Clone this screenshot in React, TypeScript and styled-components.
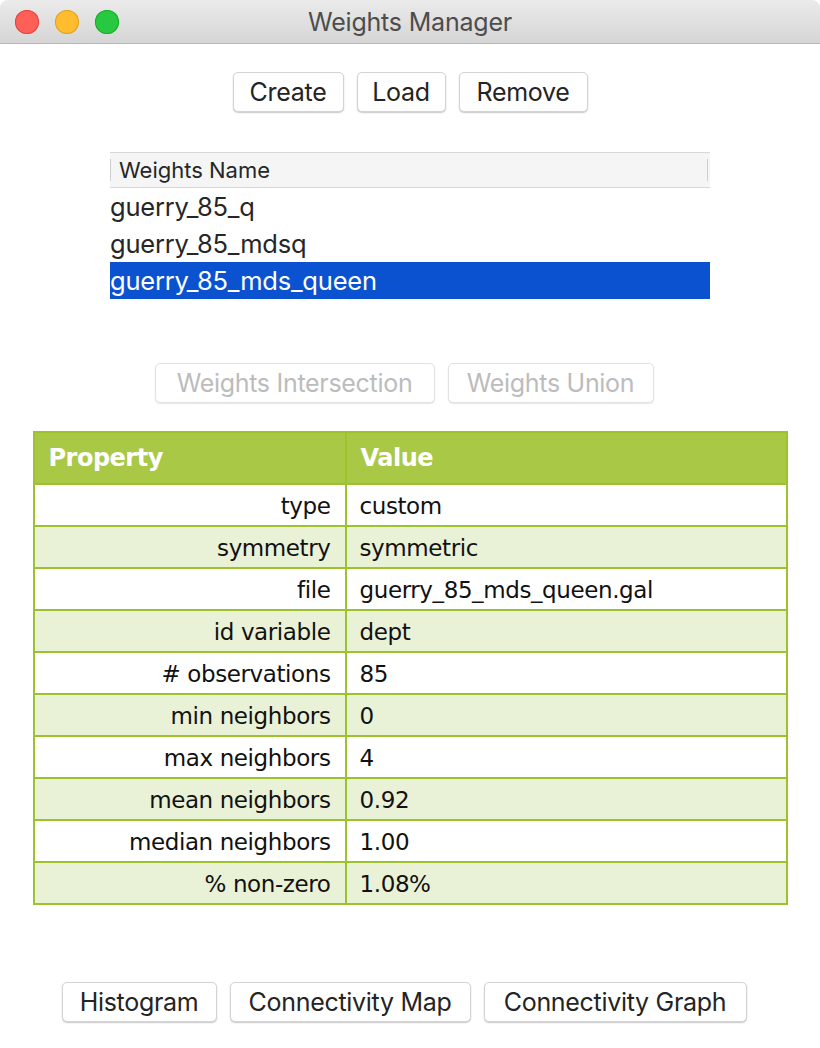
import React from "react";
import styled, { createGlobalStyle } from "styled-components";

const Global = createGlobalStyle`
  html, body { margin: 0; padding: 0; background: #ffffff; }
  body { font-family: Inter, "Liberation Sans", sans-serif; }
`;

const Window = styled.div`
  width: 820px;
  height: 1048px;
  background: #ffffff;
  display: flex;
  flex-direction: column;
  overflow: hidden;
`;

const TitleBar = styled.div`
  height: 43px;
  flex: none;
  display: flex;
  align-items: center;
  position: relative;
  background: linear-gradient(#ebebeb, #d5d5d5);
  border-bottom: 1px solid #b9b9b9;
  border-radius: 8px 8px 0 0;
`;

const Lights = styled.div`
  display: flex;
  gap: 16px;
  padding-left: 15px;
`;

const Light = styled.span<{ $c: string; $b: string }>`
  width: 24px;
  height: 24px;
  border-radius: 50%;
  background: ${(p) => p.$c};
  box-shadow: inset 0 0 0 1px ${(p) => p.$b};
`;

const Title = styled.div`
  position: absolute;
  left: 0;
  right: 0;
  text-align: center;
  font-size: 25px;
  letter-spacing: -0.2px;
  color: #4d4d4d;
  pointer-events: none;
`;

const Body = styled.div`
  display: flex;
  flex-direction: column;
  align-items: center;
  padding-top: 28px;
`;

const ButtonRow = styled.div<{ $mt?: number; $shift?: number }>`
  display: flex;
  gap: 13px;
  margin-top: ${(p) => p.$mt ?? 0}px;
  margin-right: ${(p) => (p.$shift ?? 0) * 2}px;
`;

const Button = styled.button<{ $w: number; $disabled?: boolean }>`
  width: ${(p) => p.$w}px;
  height: 40px;
  box-sizing: border-box;
  background: #ffffff;
  border: 1px solid ${(p) => (p.$disabled ? "#e2e2e2" : "#d3d3d3")};
  border-radius: 5px;
  box-shadow: 0 1px 1.5px ${(p) => (p.$disabled ? "rgba(0,0,0,0.10)" : "rgba(0,0,0,0.22)")};
  font-family: Inter, "Liberation Sans", sans-serif;
  font-size: 25px;
  letter-spacing: -0.3px;
  color: ${(p) => (p.$disabled ? "#bcbcbc" : "#242424")};
  padding: 0;
  display: flex;
  align-items: center;
  justify-content: center;
`;

const List = styled.div`
  width: 600px;
  margin-top: 40px;
  display: flex;
  flex-direction: column;
`;

const ListHeader = styled.div`
  height: 34px;
  background: #f5f5f5;
  border-top: 1px solid #d8d8d8;
  border-bottom: 1px solid #d8d8d8;
  display: flex;
  align-items: center;
  justify-content: space-between;
  font-size: 22px;
  color: #262626;
`;

const HeaderLabel = styled.span`
  display: flex;
  align-items: center;
  gap: 8px;
  &::before {
    content: "";
    width: 1px;
    height: 22px;
    background: #cfcfcf;
  }
`;

const HeaderSep = styled.span`
  width: 1px;
  height: 22px;
  background: #cfcfcf;
  margin-right: 2px;
`;

const ListRow = styled.div<{ $sel?: boolean }>`
  height: 37px;
  display: flex;
  align-items: center;
  font-size: 25.5px;
  letter-spacing: -0.2px;
  color: ${(p) => (p.$sel ? "#ffffff" : "#262626")};
  background: ${(p) => (p.$sel ? "#0b52d1" : "transparent")};
`;

const Table = styled.table`
  margin-top: 28px;
  width: 755px;
  border-collapse: collapse;
  border: 2px solid #9cc22c;
  font-family: "DejaVu Sans", Verdana, sans-serif;
  color: #111111;
`;

const Th = styled.th<{ $w?: number }>`
  height: 52px;
  background: #a8c846;
  color: #ffffff;
  font-size: 24px;
  font-weight: bold;
  text-align: left;
  padding: 0 14px;
  border: 2px solid #9cc22c;
  width: ${(p) => (p.$w ? `${p.$w}px` : "auto")};
  box-sizing: border-box;
  letter-spacing: -0.5px;
`;

const Tr = styled.tr<{ $alt: boolean }>`
  height: 42px;
  background: ${(p) => (p.$alt ? "#e9f1d7" : "#ffffff")};
`;

const Td = styled.td<{ $right?: boolean }>`
  border: 2px solid #9cc22c;
  font-size: 23px;
  letter-spacing: -0.4px;
  padding: 2px ${(p) => (p.$right ? "14px" : "0")} 0 ${(p) => (p.$right ? "0" : "13px")};
  text-align: ${(p) => (p.$right ? "right" : "left")};
`;

const rows: [string, string][] = [
  ["type", "custom"],
  ["symmetry", "symmetric"],
  ["file", "guerry_85_mds_queen.gal"],
  ["id variable", "dept"],
  ["# observations", "85"],
  ["min neighbors", "0"],
  ["max neighbors", "4"],
  ["mean neighbors", "0.92"],
  ["median neighbors", "1.00"],
  ["% non-zero", "1.08%"],
];

export default function App() {
  return (
    <Window>
      <Global />
      <TitleBar>
        <Lights>
          <Light $c="#fe5f57" $b="#e0443e" />
          <Light $c="#febc2e" $b="#dea123" />
          <Light $c="#28c840" $b="#1aab29" />
        </Lights>
        <Title>Weights Manager</Title>
      </TitleBar>
      <Body>
        <ButtonRow>
          <Button $w={111}>Create</Button>
          <Button $w={89}>Load</Button>
          <Button $w={129}>Remove</Button>
        </ButtonRow>
        <List>
          <ListHeader>
            <HeaderLabel>Weights Name</HeaderLabel>
            <HeaderSep />
          </ListHeader>
          <ListRow>guerry_85_q</ListRow>
          <ListRow>guerry_85_mdsq</ListRow>
          <ListRow $sel>guerry_85_mds_queen</ListRow>
        </List>
        <ButtonRow $mt={64} $shift={6}>
          <Button $w={280} $disabled>Weights Intersection</Button>
          <Button $w={206} $disabled>Weights Union</Button>
        </ButtonRow>
        <Table>
          <thead>
            <tr>
              <Th $w={312}>Property</Th>
              <Th>Value</Th>
            </tr>
          </thead>
          <tbody>
            {rows.map(([k, v], i) => (
              <Tr key={k} $alt={i % 2 === 1}>
                <Td $right>{k}</Td>
                <Td>{v}</Td>
              </Tr>
            ))}
          </tbody>
        </Table>
        <ButtonRow $mt={77} $shift={6}>
          <Button $w={155}>Histogram</Button>
          <Button $w={241}>Connectivity Map</Button>
          <Button $w={263}>Connectivity Graph</Button>
        </ButtonRow>
      </Body>
    </Window>
  );
}
